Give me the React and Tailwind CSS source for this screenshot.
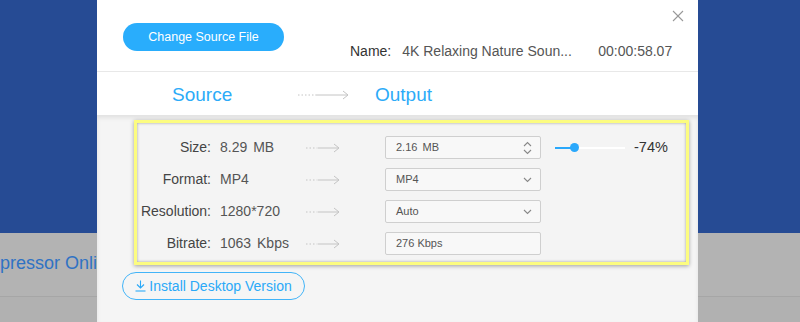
import React from "react";

const font = { fontFamily: '"Liberation Sans", Arial, sans-serif' };

function Arrow({ w = 34 }) {
  return (
    <svg width={w} height="10" viewBox={`0 0 ${w} 10`} className="block">
      <line x1="0" y1="5" x2={w * 0.32} y2="5" stroke="#c4c4c4" strokeWidth="1" strokeDasharray="1.5 2" />
      <line x1={w * 0.34} y1="5" x2={w - 1} y2="5" stroke="#c4c4c4" strokeWidth="1" />
      <polyline points={`${w - 6},1 ${w - 1},5 ${w - 6},9`} fill="none" stroke="#c4c4c4" strokeWidth="1" />
    </svg>
  );
}

function ChevDown() {
  return (
    <svg width="9" height="6" viewBox="0 0 9 6">
      <polyline points="1,1 4.5,4.5 8,1" fill="none" stroke="#888" strokeWidth="1.1" />
    </svg>
  );
}

function ChevUpDown() {
  return (
    <svg width="9" height="14" viewBox="0 0 9 14">
      <polyline points="1,5 4.5,1.5 8,5" fill="none" stroke="#888" strokeWidth="1.1" />
      <polyline points="1,9 4.5,12.5 8,9" fill="none" stroke="#888" strokeWidth="1.1" />
    </svg>
  );
}

function Row({ label, value, box, icon, extra }) {
  return (
    <div className="flex h-[23px] items-center">
      <div className="w-[74px] text-right text-[14px] text-[#444] whitespace-nowrap">{label}</div>
      <div className="ml-[9px] w-[86px] text-[14px] text-[#555] whitespace-nowrap" style={{ wordSpacing: "2px" }}>{value}</div>
      <Arrow w={34} />
      <div className="ml-[45px] flex h-[23px] w-[156px] items-center justify-between rounded-[2px] border border-[#cfcfcf] bg-[#f8f8f8] pl-[10px] pr-[8px] text-[11px] text-[#555]">
        <span>{box}</span>
        {icon}
      </div>
      {extra}
    </div>
  );
}

export default function App() {
  return (
    <div className="relative h-[322px] w-[800px] overflow-hidden" style={font}>
      {/* background page */}
      <div className="flex h-full flex-col">
        <div className="h-[233px] bg-[#264b94]"></div>
        <div className="flex h-[63px] items-center bg-[#b3b3b3] pb-[3px]">
          <span className="text-[18px] text-[#2f72c4] whitespace-nowrap">pressor Online</span>
        </div>
        <div className="h-px bg-[#a6a6a6]"></div>
        <div className="flex-1 bg-[#b1b1b1]"></div>
      </div>

      {/* modal */}
      <div className="absolute left-[97px] top-0 flex h-[322px] w-[601px] flex-col bg-white">
        <button className="absolute right-[14px] top-[10px] text-[#999]">
          <svg width="12" height="12" viewBox="0 0 12 12">
            <line x1="1" y1="1" x2="11" y2="11" stroke="#999" strokeWidth="1.1" />
            <line x1="11" y1="1" x2="1" y2="11" stroke="#999" strokeWidth="1.1" />
          </svg>
        </button>
        <div className="flex h-[72px] shrink-0 items-start border-b border-[#e8e8e8] pl-[26px]">
          <div className="mt-[23px] flex h-[28px] w-[161px] items-center justify-center rounded-full bg-[#29adfc] text-[12.5px] text-white">
            Change Source File
          </div>
          <div className="ml-[66px] mt-[41px] flex items-center text-[14px] whitespace-nowrap">
            <span className="text-[#333]">Name:</span>
            <span className="ml-[11px] w-[196px] text-[#555]">4K Relaxing Nature Soun...</span>
            <span className="text-[#555]">00:00:58.07</span>
          </div>
        </div>
        <div className="flex h-[43px] shrink-0 items-center pt-[3px] text-[19px] text-[#2cabf8]">
          <span className="ml-[75px] w-[126px]">Source</span>
          <Arrow w={51} />
          <span className="ml-[26px]">Output</span>
        </div>
        <div className="flex flex-1 flex-col bg-[#f5f5f5] pl-[37px] pt-[5px] shadow-[inset_0_3px_4px_rgba(0,0,0,0.08)]">
          <div className="flex h-[145px] w-[555px] flex-col gap-[9px] border-[3px] border-[#fcfc80] bg-[#f4f4f4] pt-[13px] shadow-[0_1px_4px_rgba(0,0,0,0.35),inset_0_0_3px_rgba(0,0,0,0.35)]">
            <Row
              label="Size:"
              value="8.29 MB"
              box={<span style={{ wordSpacing: "2px" }}>2.16 MB</span>}
              icon={<ChevUpDown />}
              extra={
                <div className="ml-[14px] flex items-center">
                  <div className="relative flex h-[10px] w-[70px] items-center">
                    <div className="h-[2px] w-[19px] bg-[#2aa8fb]"></div>
                    <div className="h-[2px] flex-1 bg-white"></div>
                    <div className="absolute left-[15px] h-[9px] w-[9px] rounded-full bg-[#2aa8fb]"></div>
                  </div>
                  <span className="ml-[9px] text-[14.5px] text-[#333]">-74%</span>
                </div>
              }
            />
            <Row label="Format:" value="MP4" box="MP4" icon={<ChevDown />} />
            <Row label="Resolution:" value="1280*720" box="Auto" icon={<ChevDown />} />
            <Row label="Bitrate:" value="1063 Kbps" box="276 Kbps" icon={null} />
          </div>
          <div className="-ml-[12px] mt-[7px] flex h-[28px] w-[183px] items-center justify-center gap-[3px] rounded-full border border-[#42b4f8] text-[14px] text-[#2aa9f8]">
            <svg width="11" height="12" viewBox="0 0 11 12">
              <line x1="5.5" y1="0.5" x2="5.5" y2="8" stroke="#2aa9f8" strokeWidth="1.1" />
              <polyline points="2,4.5 5.5,8 9,4.5" fill="none" stroke="#2aa9f8" strokeWidth="1.1" />
              <line x1="0.5" y1="11" x2="10.5" y2="11" stroke="#2aa9f8" strokeWidth="1.1" />
            </svg>
            <span>Install Desktop Version</span>
          </div>
        </div>
      </div>
    </div>
  );
}
